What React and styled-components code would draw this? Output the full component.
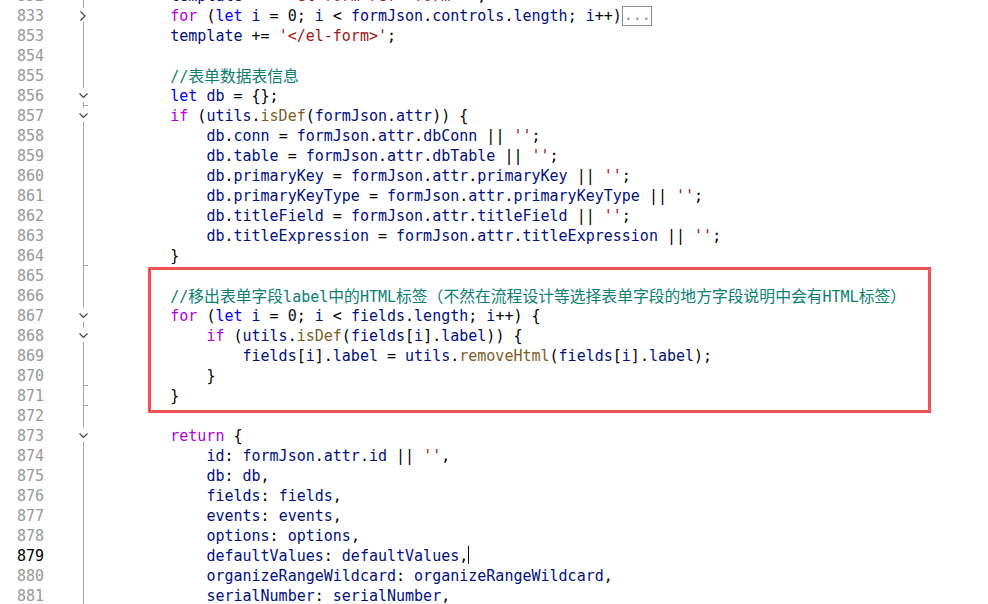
import React from "react";
import styled, { createGlobalStyle } from "styled-components";

const GlobalStyle = createGlobalStyle`
  html, body {
    margin: 0;
    padding: 0;
    background: #ffffff;
  }
  body {
    width: 988px;
    height: 604px;
    overflow: hidden;
  }
`;

const COLORS = {
  text: "#000000",
  ident: "#001080",
  fn: "#795e26",
  control: "#af00db",
  storage: "#0000ff",
  string: "#a31515",
  comment: "#0a8070",
  number: "#111111",
};

const KEYWORDS = { for: "control", if: "control", return: "control", let: "storage" };

// lines shown in the viewport, 834-852 are folded into 833
const lines = [
  { n: 832, code: `        template += '<el-form ref="form">';` },
  { n: 833, code: "        for (let i = 0; i < formJson.controls.length; i++)", fold: "closed", folded: true },
  { n: 853, code: "        template += '</el-form>';" },
  { n: 854, code: "" },
  { n: 855, code: "        //表单数据表信息" },
  { n: 856, code: "        let db = {};", fold: "open", tick: true },
  { n: 857, code: "        if (utils.isDef(formJson.attr)) {", fold: "open" },
  { n: 858, code: "            db.conn = formJson.attr.dbConn || '';" },
  { n: 859, code: "            db.table = formJson.attr.dbTable || '';" },
  { n: 860, code: "            db.primaryKey = formJson.attr.primaryKey || '';" },
  { n: 861, code: "            db.primaryKeyType = formJson.attr.primaryKeyType || '';" },
  { n: 862, code: "            db.titleField = formJson.attr.titleField || '';" },
  { n: 863, code: "            db.titleExpression = formJson.attr.titleExpression || '';" },
  { n: 864, code: "        }", tick: true },
  { n: 865, code: "" },
  { n: 866, code: "        //移出表单字段label中的HTML标签（不然在流程设计等选择表单字段的地方字段说明中会有HTML标签）" },
  { n: 867, code: "        for (let i = 0; i < fields.length; i++) {", fold: "open" },
  { n: 868, code: "            if (utils.isDef(fields[i].label)) {", fold: "open" },
  { n: 869, code: "                fields[i].label = utils.removeHtml(fields[i].label);" },
  { n: 870, code: "            }", tick: true },
  { n: 871, code: "        }", tick: true },
  { n: 872, code: "" },
  { n: 873, code: "        return {", fold: "open" },
  { n: 874, code: "            id: formJson.attr.id || '',"},
  { n: 875, code: "            db: db," },
  { n: 876, code: "            fields: fields," },
  { n: 877, code: "            events: events," },
  { n: 878, code: "            options: options," },
  { n: 879, code: "            defaultValues: defaultValues,", active: true, cursor: true },
  { n: 880, code: "            organizeRangeWildcard: organizeRangeWildcard," },
  { n: 881, code: "            serialNumber: serialNumber," },
];

const Editor = styled.div`
  position: relative;
  margin-top: -14px;
  font-family: "DejaVu Sans Mono", "Liberation Mono", "Noto Sans CJK SC", monospace;
  font-size: 15px;
  line-height: 20px;
  color: ${COLORS.text};
`;

const Row = styled.div`
  display: flex;
  height: 20px;
`;

const LineNo = styled.div`
  flex-shrink: 0;
  width: 44px;
  text-align: right;
  color: ${(p) => (p.$active ? "#000000" : "#999999")};
`;

const FoldCell = styled.div`
  position: relative;
  flex-shrink: 0;
  width: 16px;
  margin: 0 7px 0 31px;

  &::before,
  &::after {
    content: "";
    position: absolute;
    left: 8px;
    width: 1px;
    background: #a6a6a6;
  }
  &::before {
    top: 0;
    height: ${(p) => (p.$chevron ? "2px" : "20px")};
  }
  &::after {
    top: 16px;
    height: ${(p) => (p.$chevron ? "4px" : "0")};
  }
`;

const Tick = styled.span`
  position: absolute;
  left: 8px;
  bottom: 0;
  width: 5px;
  height: 1px;
  background: #a6a6a6;
`;

const Chevron = styled.svg`
  position: absolute;
  left: ${(p) => (p.$closed ? "5px" : "4px")};
  top: ${(p) => (p.$closed ? "5px" : "7px")};
  overflow: visible;
`;

const Code = styled.div`
  flex: 1;
  white-space: pre;
`;

const Tok = styled.span`
  color: ${(p) => COLORS[p.$kind] || COLORS.text};
`;

const Cjk = styled.span`
  font-family: "Noto Sans CJK SC", sans-serif;
  font-size: 15.8px;
`;

const FoldBox = styled.span`
  display: inline-block;
  box-sizing: border-box;
  height: 20px;
  line-height: 17px;
  padding: 0 0 0 1px;
  border: 1px solid #8c8c8c;
  color: #8c8c8c;
  vertical-align: top;
`;

const Caret = styled.span`
  display: inline-block;
  width: 1px;
  height: 18px;
  margin-top: 0;
  background: #000000;
  vertical-align: top;
`;

const Highlight = styled.div`
  position: absolute;
  left: 148px;
  top: 281px;
  width: 783px;
  height: 146px;
  box-sizing: border-box;
  border: 3px solid #ef5352;
  pointer-events: none;
`;

function splitCjk(text) {
  const parts = text.split(/([\u3000-\u303f\u4e00-\u9fff\uff00-\uffef]+)/);
  return parts.map((part, i) =>
    i % 2 === 1 ? <Cjk key={i}>{part}</Cjk> : part
  );
}

function tokenize(code) {
  const re = /(\/\/.*$)|('[^']*')|([A-Za-z_$][\w$]*)|(\d+)|(\s+)|([^\w\s'])/g;
  const out = [];
  let m;
  while ((m = re.exec(code))) {
    const [tok, comment, str, ident, num] = m;
    let kind = "text";
    if (comment) kind = "comment";
    else if (str) kind = "string";
    else if (ident) {
      if (KEYWORDS[ident]) kind = KEYWORDS[ident];
      else if (code[re.lastIndex] === "(") kind = "fn";
      else kind = "ident";
    } else if (num) kind = "number";
    out.push({ kind, text: tok });
  }
  return out;
}

function CodeLine({ line }) {
  return (
    <Code>
      {tokenize(line.code).map((t, i) => (
        <Tok key={i} $kind={t.kind}>
          {t.kind === "comment" ? splitCjk(t.text) : t.text}
        </Tok>
      ))}
      {line.folded && <FoldBox>...</FoldBox>}
      {line.cursor && <Caret />}
    </Code>
  );
}

function Gutter({ line }) {
  return (
    <FoldCell $chevron={!!line.fold}>
      {line.fold === "closed" && (
        <Chevron $closed width="7" height="10" viewBox="0 0 7 10">
          <polyline points="0.5,0.5 5,5 0.5,9.5" fill="none" stroke="#444" strokeWidth="1.2" />
        </Chevron>
      )}
      {line.fold === "open" && (
        <Chevron width="9" height="5" viewBox="0 0 9 5">
          <polyline points="0.5,0.5 4.5,4.5 8.5,0.5" fill="none" stroke="#444" strokeWidth="1.2" />
        </Chevron>
      )}
      {line.tick && <Tick />}
    </FoldCell>
  );
}

export default function App() {
  return (
    <>
      <GlobalStyle />
      <Editor>
        {lines.map((line) => (
          <Row key={line.n}>
            <LineNo $active={line.active}>{line.n}</LineNo>
            <Gutter line={line} />
            <CodeLine line={line} />
          </Row>
        ))}
        <Highlight />
      </Editor>
    </>
  );
}
